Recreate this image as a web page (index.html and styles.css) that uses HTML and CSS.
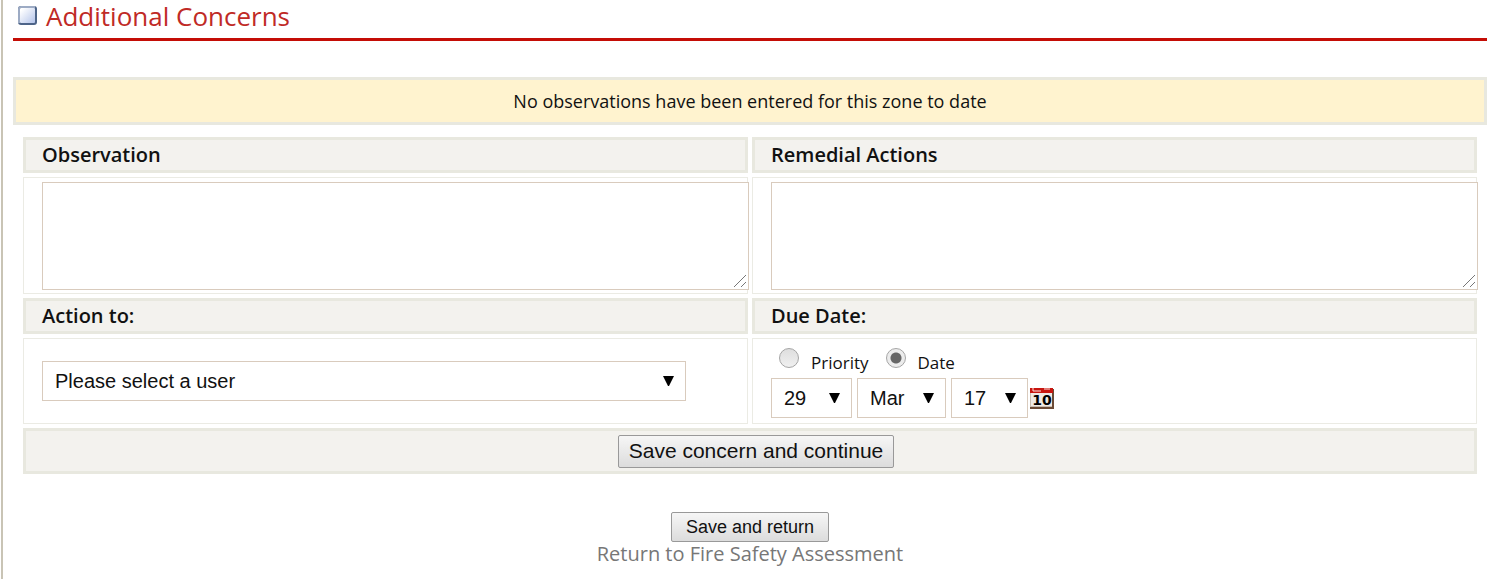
FILE: index.html
```html
<!DOCTYPE html>
<html lang="en">
<head>
  <meta charset="UTF-8" />
  <meta name="viewport" content="width=device-width, initial-scale=1.0"/>
  <title>Additional Concerns</title>
  <link rel="stylesheet" href="styles.css">
</head>
<body>

  <main class="content">
    <h1 class="page-title">
      <svg class="bullet" width="20" height="20" viewBox="0 0 20 20" aria-hidden="true">
        <defs>
          <linearGradient id="bulletFill" x1="0" y1="0" x2="1" y2="1">
            <stop offset="0.1" stop-color="#fff"/>
            <stop offset="1" stop-color="#b4c4ea"/>
          </linearGradient>
        </defs>
        <rect width="19" height="19" rx="3" fill="#4d6488"/>
        <path d="M0 17V3q0-3 3-3h14v2H2v15z" fill="#9dabc4"/>
        <rect x="2" y="2" width="15" height="15" rx="1" fill="url(#bulletFill)"/>
      </svg>
      Additional Concerns
    </h1>

    <p class="notice">No observations have been entered for this zone to date</p>

    <form>
      <table class="concern">
        <tr>
          <th><label for="observation">Observation</label></th>
          <th><label for="remedial">Remedial Actions</label></th>
        </tr>
        <tr>
          <td class="text-cell"><textarea id="observation"></textarea></td>
          <td class="text-cell"><textarea id="remedial"></textarea></td>
        </tr>
        <tr>
          <th><label for="user">Action to:</label></th>
          <th>Due Date:</th>
        </tr>
        <tr>
          <td>
            <select id="user" class="user">
              <option>Please select a user</option>
            </select>
          </td>
          <td>
            <div class="due-type">
              <input type="radio" name="due" id="priority">
              <label for="priority">Priority</label>
              <input type="radio" name="due" id="date" checked>
              <label for="date">Date</label>
            </div>
            <div class="due-date">
              <select class="day" aria-label="Day"><option>29</option></select>
              <select class="month" aria-label="Month"><option>Mar</option></select>
              <select class="year" aria-label="Year"><option>17</option></select>
              <button type="button" class="calendar" aria-label="Pick a date">
                <svg width="24" height="21" viewBox="0 0 24 21">
                  <rect y="1" width="24" height="20" fill="#6b4a35"/>
                  <rect y="5" width="22" height="14" fill="#c9bcb0"/>
                  <rect x="1" y="5" width="21" height="13" fill="#efe9e4"/>
                  <rect width="23" height="5" fill="#c8150f"/>
                  <path d="M3 0v3h8M14 1h6" fill="none" stroke="#fbe3e0" stroke-width="1"/>
                  <text x="12" y="17" text-anchor="middle" class="calendar-day">10</text>
                </svg>
              </button>
            </div>
          </td>
        </tr>
        <tr>
          <td colspan="2" class="save-cell"><button type="submit" class="btn btn-large">Save concern and continue</button></td>
        </tr>
      </table>

      <div class="footer">
        <button type="submit" class="btn">Save and return</button>
        <a href="#">Return to Fire Safety Assessment</a>
      </div>
    </form>
  </main>

</body>
</html>
```

FILE: styles.css
```css
* { box-sizing: border-box; }

body {
  margin: 0;
  background: #fff;
  font-family: "Trebuchet MS", "Open Sans", sans-serif;
  font-size: 18px;
  color: #111;
}

.content {
  margin-left: 1px;
  padding: 0 2px 12px 10px;
  border-left: 2px solid #c9c4b5;
  min-height: 100vh;
}

.page-title {
  display: flex;
  align-items: center;
  gap: 8px;
  height: 41px;
  margin: 0 0 36px;
  padding: 0 0 6px 5px;
  border-bottom: 3px solid #c40d06;
  font-size: 26px;
  font-weight: 400;
  line-height: 32px;
  color: #c02a26;
}

.notice {
  margin: 0 0 8px;
  padding: 8px;
  border: 3px solid #e8e8df;
  background: #fff3cf;
  font-size: 18px;
  line-height: 26px;
  text-align: center;
}

.concern {
  width: calc(100% - 12px);
  margin: 0 6px;
  border-spacing: 4px;
  table-layout: fixed;
}

th {
  height: 36px;
  padding: 0 16px;
  border: 3px solid #e8e8df;
  background: #f3f2ee;
  font-size: 20px;
  font-weight: 600;
  line-height: 30px;
  text-align: left;
}

td {
  height: 86px;
  padding: 0 18px;
  border: 1px solid #ebebe4;
}

.text-cell {
  padding: 4px 0 3px 18px;
}

textarea {
  display: block;
  box-sizing: content-box;
  width: 100%;
  height: 106px;
  padding: 0;
  border: 1px solid #d9cbbd;
  background: #fff;
  resize: both;
}

textarea::-webkit-resizer {
  background: url("data:image/svg+xml,%3Csvg xmlns='http://www.w3.org/2000/svg' width='15' height='15'%3E%3Cpath d='M1 13L13 1M8 13l5-5' stroke='%23777' stroke-width='1'/%3E%3C/svg%3E") no-repeat right bottom;
}

select {
  height: 40px;
  padding: 0 12px;
  border: 1px solid #d9cbbd;
  border-radius: 0;
  appearance: none;
  background: #fff url("data:image/svg+xml,%3Csvg xmlns='http://www.w3.org/2000/svg' width='11' height='10'%3E%3Cpath d='M0 0h11L6 10H5z'/%3E%3C/svg%3E") no-repeat right 11px center;
  font-family: "Liberation Sans", Arial, sans-serif;
  font-size: 20px;
  color: #111;
}

.user { width: 644px; max-width: 100%; display: block; }
.day { width: 81px; }
.month { width: 89px; }
.year { width: 77px; }

.due-type {
  display: flex;
  align-items: flex-start;
  height: 34px;
  padding: 4px 0 0 8px;
  font-size: 17px;
  line-height: 24px;
}

.due-type label {
  margin: 3px 17px 0 12px;
}

input[type="radio"] {
  appearance: none;
  width: 20px;
  height: 20px;
  margin: 0;
  border: 1px solid #a5a5a5;
  border-radius: 50%;
  background: linear-gradient(#dedede, #f0f0f0);
}

input[type="radio"]:checked {
  background: radial-gradient(circle, #666 0 5px, #ececec 6px);
}

.due-date {
  display: flex;
  align-items: center;
  gap: 5px;
}

.calendar {
  display: flex;
  margin-left: -3px;
  padding: 0;
  border: 0;
  background: none;
}

.calendar-day {
  font: bold 14px "DejaVu Sans", sans-serif;
}

.save-cell {
  height: 46px;
  padding: 0 6px 0 18px;
  border: 3px solid #e8e8df;
  background: #f3f2ee;
}

.btn {
  height: 30px;
  padding: 0 14px;
  border: 1px solid #999;
  border-radius: 2px;
  background: linear-gradient(#f6f6f6, #dcdcdc);
  font-family: "Liberation Sans", Arial, sans-serif;
  font-size: 18px;
  color: #111;
}

.btn-large {
  display: block;
  height: 33px;
  margin: 0 auto;
  padding: 0 10px;
  font-size: 21px;
}

.footer {
  display: flex;
  flex-direction: column;
  align-items: center;
  margin-top: 34px;
}

.footer a {
  font-size: 20px;
  line-height: 24px;
  color: #777;
  text-decoration: none;
}
```
